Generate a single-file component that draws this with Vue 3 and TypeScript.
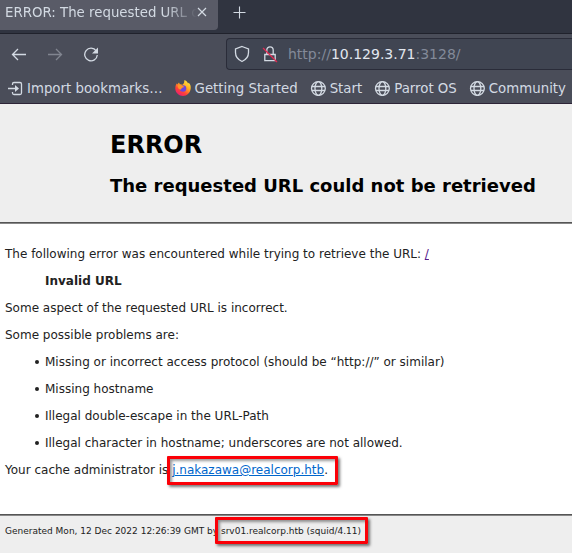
<script setup lang="ts">
import { ref } from 'vue'

interface Bookmark {
  label: string
  icon: 'import' | 'firefox' | 'globe'
}

const bookmarks: Bookmark[] = [
  { label: 'Import bookmarks…', icon: 'import' },
  { label: 'Getting Started', icon: 'firefox' },
  { label: 'Start', icon: 'globe' },
  { label: 'Parrot OS', icon: 'globe' },
  { label: 'Community', icon: 'globe' },
]

const problems = ref<string[]>([
  'Missing or incorrect access protocol (should be “http://” or similar)',
  'Missing hostname',
  'Illegal double-escape in the URL-Path',
  'Illegal character in hostname; underscores are not allowed.',
])
</script>

<template>
  <div class="browser">
    <div class="tabs">
      <div class="tab">
        <span class="tab-title">ERROR: The requested URL could not be retrieved</span>
        <svg class="close" width="10" height="10" viewBox="0 0 10 10"><path d="M1 1l8 8M9 1L1 9" /></svg>
      </div>
      <svg class="plus" width="14" height="14" viewBox="0 0 14 14"><path d="M7.500 1.500v12M1.500 7.500h12" /></svg>
    </div>

    <div class="toolbar">
      <svg class="nav" width="16" height="16" viewBox="0 0 16 16"><path d="M15 8.500H1.500M7 3L1.500 8.500L7 14" /></svg>
      <svg class="nav dim" width="16" height="16" viewBox="0 0 16 16"><path d="M1 8.500h13.500M9 3L14.500 8.500L9 14" /></svg>
      <svg class="nav" width="16" height="16" viewBox="0 0 16 16">
        <path d="M13.200 4.900A6.300 6.300 0 1 0 14.300 9" />
        <path class="solid" d="M15 1.500v6H9z" />
      </svg>
      <div class="urlbar">
        <svg class="shield" width="16" height="18" viewBox="0 0 16 18"><path d="M8 1.500L14.500 4v3.500c0 4-2 7-6.500 9-4.500-2-6.500-5-6.500-9V4z" /></svg>
        <svg class="lock" width="16" height="18" viewBox="0 0 16 18">
          <path d="M2.800 9.500h10.400v6.200H2.800zM4.800 9.500V5a3.200 3.200 0 0 1 6.400 0V9.500" />
          <path class="slash" d="M1 3l14 14" />
        </svg>
        <span class="url">http://<b>10.129.3.71</b>:3128/</span>
      </div>
    </div>

    <div class="bookmarks">
      <div v-for="item in bookmarks" :key="item.label" class="bookmark" :class="item.icon">
        <svg v-if="item.icon === 'import'" width="16" height="16" viewBox="0 0 16 16">
          <path d="M5.500 5V4a1.500 1.500 0 0 1 1.500-1.500h6a1.500 1.500 0 0 1 1.500 1.500v9a1.500 1.500 0 0 1-1.500 1.500H7a1.500 1.500 0 0 1-1.500-1.500v-1M1 8.500h8" />
          <path class="solid" d="M8 5L12 8.500L8 12z" />
        </svg>
        <svg v-else-if="item.icon === 'firefox'" width="16" height="16" viewBox="0 0 16 16">
          <defs>
            <linearGradient id="flame" x1=".85" y1="0" x2=".2" y2="1">
              <stop offset="0" stop-color="#fff044" />
              <stop offset=".4" stop-color="#ffa820" />
              <stop offset=".7" stop-color="#ff4038" />
              <stop offset="1" stop-color="#e51880" />
            </linearGradient>
          </defs>
          <path fill="url(#flame)" d="M9.500 0c2 1 3 2 3.500 3.500l.8-.8C15.300 4.200 16 6.200 15.700 8.500 15.300 12.800 12 16 8 16S.3 12.800.3 8.500C.3 6 1 4.500 2 3.300l.3 1.300L4 2.500l.8 1.800 2.800.4L9 3z" />
          <circle cx="8" cy="8.500" r="3.300" fill="#6a46db" />
          <path fill="#ff9526" d="M2.500 5.500c2-1.500 4-.8 5 .3L9.500 7 7 7.800 6 9.500C4 10 3 8 2.500 5.500z" />
        </svg>
        <svg v-else width="16" height="16" viewBox="0 0 16 16">
          <circle cx="8.400" cy="8.500" r="6.900" />
          <ellipse cx="8.400" cy="8.500" rx="3.400" ry="6.900" />
          <path d="M2 6.500h13M2 10.500h13" />
        </svg>
        <span class="label">{{ item.label }}</span>
      </div>
    </div>

    <main class="page">
      <header class="titles">
        <h1>ERROR</h1>
        <h2>The requested URL could not be retrieved</h2>
      </header>
      <section class="content">
        <p>The following error was encountered while trying to retrieve the URL: <a class="root">/</a></p>
        <blockquote>Invalid URL</blockquote>
        <p>Some aspect of the requested URL is incorrect.</p>
        <p>Some possible problems are:</p>
        <ul>
          <li v-for="problem in problems" :key="problem">{{ problem }}</li>
        </ul>
        <p>Your cache administrator is <span class="marked mail"><a>j.nakazawa@realcorp.htb</a>.</span></p>
      </section>
      <footer class="footer">
        Generated Mon, 12 Dec 2022 12:26:39 GMT by <span class="marked host">srv01.realcorp.htb (squid/4.11)</span>
      </footer>
    </main>
  </div>
</template>

<style>
body {
  margin: 0;
  overflow: hidden;
}
</style>

<style scoped>
.browser {
  width: 572px;
  height: 553px;
  overflow: hidden;
  display: flex;
  flex-direction: column;
  box-sizing: border-box;
  background: #fff;
  font-family: 'DejaVu Sans', sans-serif;
}
svg {
  flex: none;
  fill: none;
  stroke: #d3dae3;
  stroke-width: 1.3;
}
.tabs {
  height: 34px;
  flex: none;
  box-sizing: border-box;
  display: flex;
  align-items: flex-start;
  background: #303440;
  border-bottom: 1px solid #20222c;
}
.tab {
  width: 218px;
  height: 30px;
  box-sizing: border-box;
  display: flex;
  align-items: center;
  padding: 0 11px 6px 5px;
  background: #595b67;
  border-radius: 0 0 4px 0;
}
.tab-title {
  width: 192px;
  padding-top: 2px;
  overflow: hidden;
  white-space: nowrap;
  font-size: 13.33px;
  line-height: 20px;
  color: #d3dae3;
  mask-image: linear-gradient(to left, transparent, #000 32px);
}
.close {
  stroke-width: 1.2;
}
.plus {
  margin: 5px 0 0 14px;
  stroke-width: 1.1;
}
.toolbar {
  height: 36px;
  flex: none;
  display: flex;
  align-items: center;
  gap: 20px;
  padding: 4px 0 0 11px;
  box-sizing: border-box;
  background: #4a4d59;
}
.nav.dim {
  opacity: .4;
}
.solid {
  fill: #d3dae3;
  stroke: none;
}
.urlbar {
  flex: 1;
  height: 32px;
  box-sizing: border-box;
  display: flex;
  align-items: center;
  margin-left: 107px;
  padding-left: 7px;
  border: 1px solid #2a2c39;
  border-right: 0;
  border-radius: 4px 0 0 4px;
  background: #404552;
}
.lock {
  margin-left: 12px;
}
.lock .slash {
  stroke: #e22850;
}
.url {
  margin-left: 10px;
  font-size: 14px;
  line-height: 18px;
  color: #838a99;
}
.url b {
  font-weight: normal;
  color: #e2e7ef;
}
.bookmarks {
  height: 34px;
  flex: none;
  box-sizing: border-box;
  display: flex;
  align-items: center;
  padding: 3px 0 0 7px;
  gap: 12px;
  background: #4a4d59;
  border-bottom: 1px solid #2d2437;
}
.bookmark {
  display: flex;
  align-items: center;
  gap: 4px;
  font-size: 13.33px;
  line-height: 18px;
  white-space: nowrap;
  color: #d3dae3;
}
.label {
  padding-top: 2px;
}
.firefox svg {
  stroke: none;
}
.page {
  flex: 1;
  display: flex;
  flex-direction: column;
  font-size: 12px;
  line-height: 14px;
  color: #222;
}
.titles {
  height: 120px;
  flex: none;
  box-sizing: border-box;
  padding: 27px 0 0 110px;
  background: linear-gradient(#555 0 0) 0 118px / 100% 1px no-repeat, linear-gradient(#888 0 0) 0 119px / 100% 1px no-repeat, #eee;
  color: #000;
}
h1 {
  margin: 0;
  font-size: 24px;
  line-height: 28px;
}
h2 {
  margin: 16px 0 0;
  font-size: 18px;
  line-height: 21px;
}
.content {
  flex: 1;
  padding: 23px 5px 0;
}
p,
blockquote,
ul {
  margin: 0 0 13px;
}
blockquote {
  margin-left: 40px;
  font-weight: bold;
}
ul {
  padding-left: 40px;
  list-style: none;
}
li {
  display: flex;
  margin-bottom: 13px;
}
li::before {
  content: '';
  width: 4px;
  height: 4px;
  margin: 5px 6px 0 -10px;
  border-radius: 50%;
  background: #222;
}
a {
  color: #0066cc;
  text-decoration: underline;
}
.root {
  color: #551a8b;
}
.marked {
  position: relative;
}
.marked::after {
  content: '';
  position: absolute;
  border: 3px solid #fb0007;
  border-radius: 1px;
  box-shadow: 2px 2px 3px #0008, inset 2px 2px 3px #0006;
}
.mail::after {
  inset: -7px -10px -8px -5px;
}
.host::after {
  inset: -9px -7px -8px -6px;
}
.footer {
  height: 39px;
  flex: none;
  box-sizing: border-box;
  padding: 9px 5px 0;
  background: linear-gradient(#555 0 0) 0 0 / 100% 1px no-repeat, linear-gradient(#888 0 0) 0 1px / 100% 1px no-repeat, #eee;
  font-size: 9px;
  line-height: 16px;
  white-space: nowrap;
}
</style>
